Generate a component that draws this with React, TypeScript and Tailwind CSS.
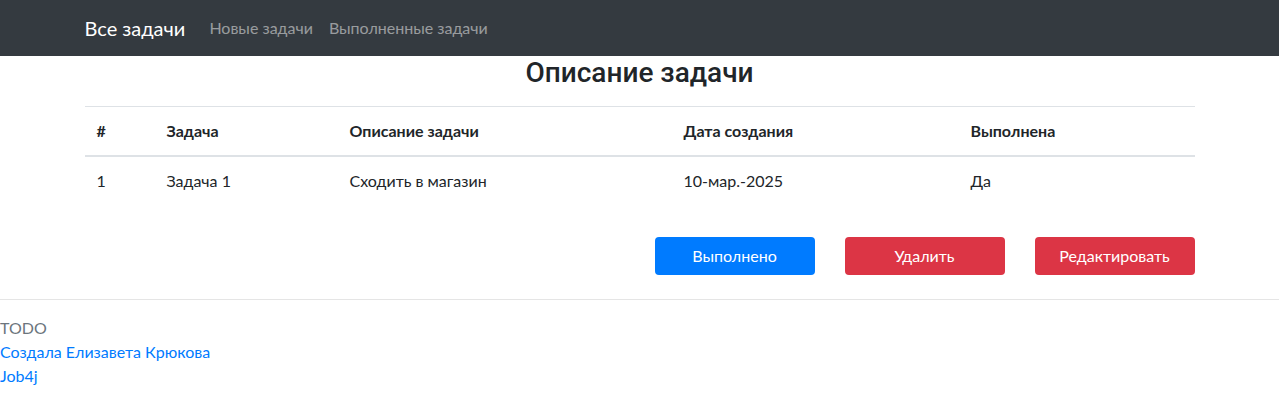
import React from "react";

export default function App() {
  const font = { fontFamily: 'Lato, "Open Sans", sans-serif' };
  const head = { fontFamily: 'Roboto, "Open Sans", sans-serif' };
  return (
    <div className="bg-white text-[#212529] text-[16px] leading-[1.5]" style={font}>
      <nav className="h-[56px] bg-[#343a40] flex items-center">
        <div className="w-[1140px] mx-auto px-[15px] flex items-center">
          <span className="text-white text-[20px] leading-[30px] mr-4">Все задачи</span>
          <span className="text-white/50 px-2">Новые задачи</span>
          <span className="text-white/50 px-2">Выполненные задачи</span>
        </div>
      </nav>
      <div className="w-[1140px] mx-auto px-[15px]">
        <h3 className="text-[28px] leading-[1.2] font-medium text-center mb-4" style={head}>Описание задачи</h3>
        <table className="w-full border-collapse">
          <thead>
            <tr>
              <th className="w-[70px] text-left font-bold p-3 border-t border-[#dee2e6] border-b-2">#</th>
              <th className="w-[183px] text-left font-bold p-3 border-t border-[#dee2e6] border-b-2">Задача</th>
              <th className="w-[334px] text-left font-bold p-3 border-t border-[#dee2e6] border-b-2">Описание задачи</th>
              <th className="w-[287px] text-left font-bold p-3 border-t border-[#dee2e6] border-b-2">Дата создания</th>
              <th className="text-left font-bold p-3 border-t border-[#dee2e6] border-b-2">Выполнена</th>
            </tr>
          </thead>
          <tbody>
            <tr>
              <td className="p-3">1</td>
              <td className="p-3">Задача 1</td>
              <td className="p-3">Сходить в магазин</td>
              <td className="p-3">10-мар.-2025</td>
              <td className="p-3">Да</td>
            </tr>
          </tbody>
        </table>
        <div className="flex justify-end gap-[30px] mt-[32px]">
          <button className="w-[160px] h-[38px] rounded bg-[#007bff] text-white">Выполнено</button>
          <button className="w-[160px] h-[38px] rounded bg-[#dc3545] text-white">Удалить</button>
          <button className="w-[160px] h-[38px] rounded bg-[#dc3545] text-white">Редактировать</button>
        </div>
      </div>
      <hr className="mt-6 mb-4 border-t border-black/10" />
      <footer>
        <div className="text-[#6c757d]">TODO</div>
        <div className="text-[#007bff]">Создала Елизавета Крюкова</div>
        <div className="text-[#007bff]">Job4j</div>
      </footer>
    </div>
  );
}
